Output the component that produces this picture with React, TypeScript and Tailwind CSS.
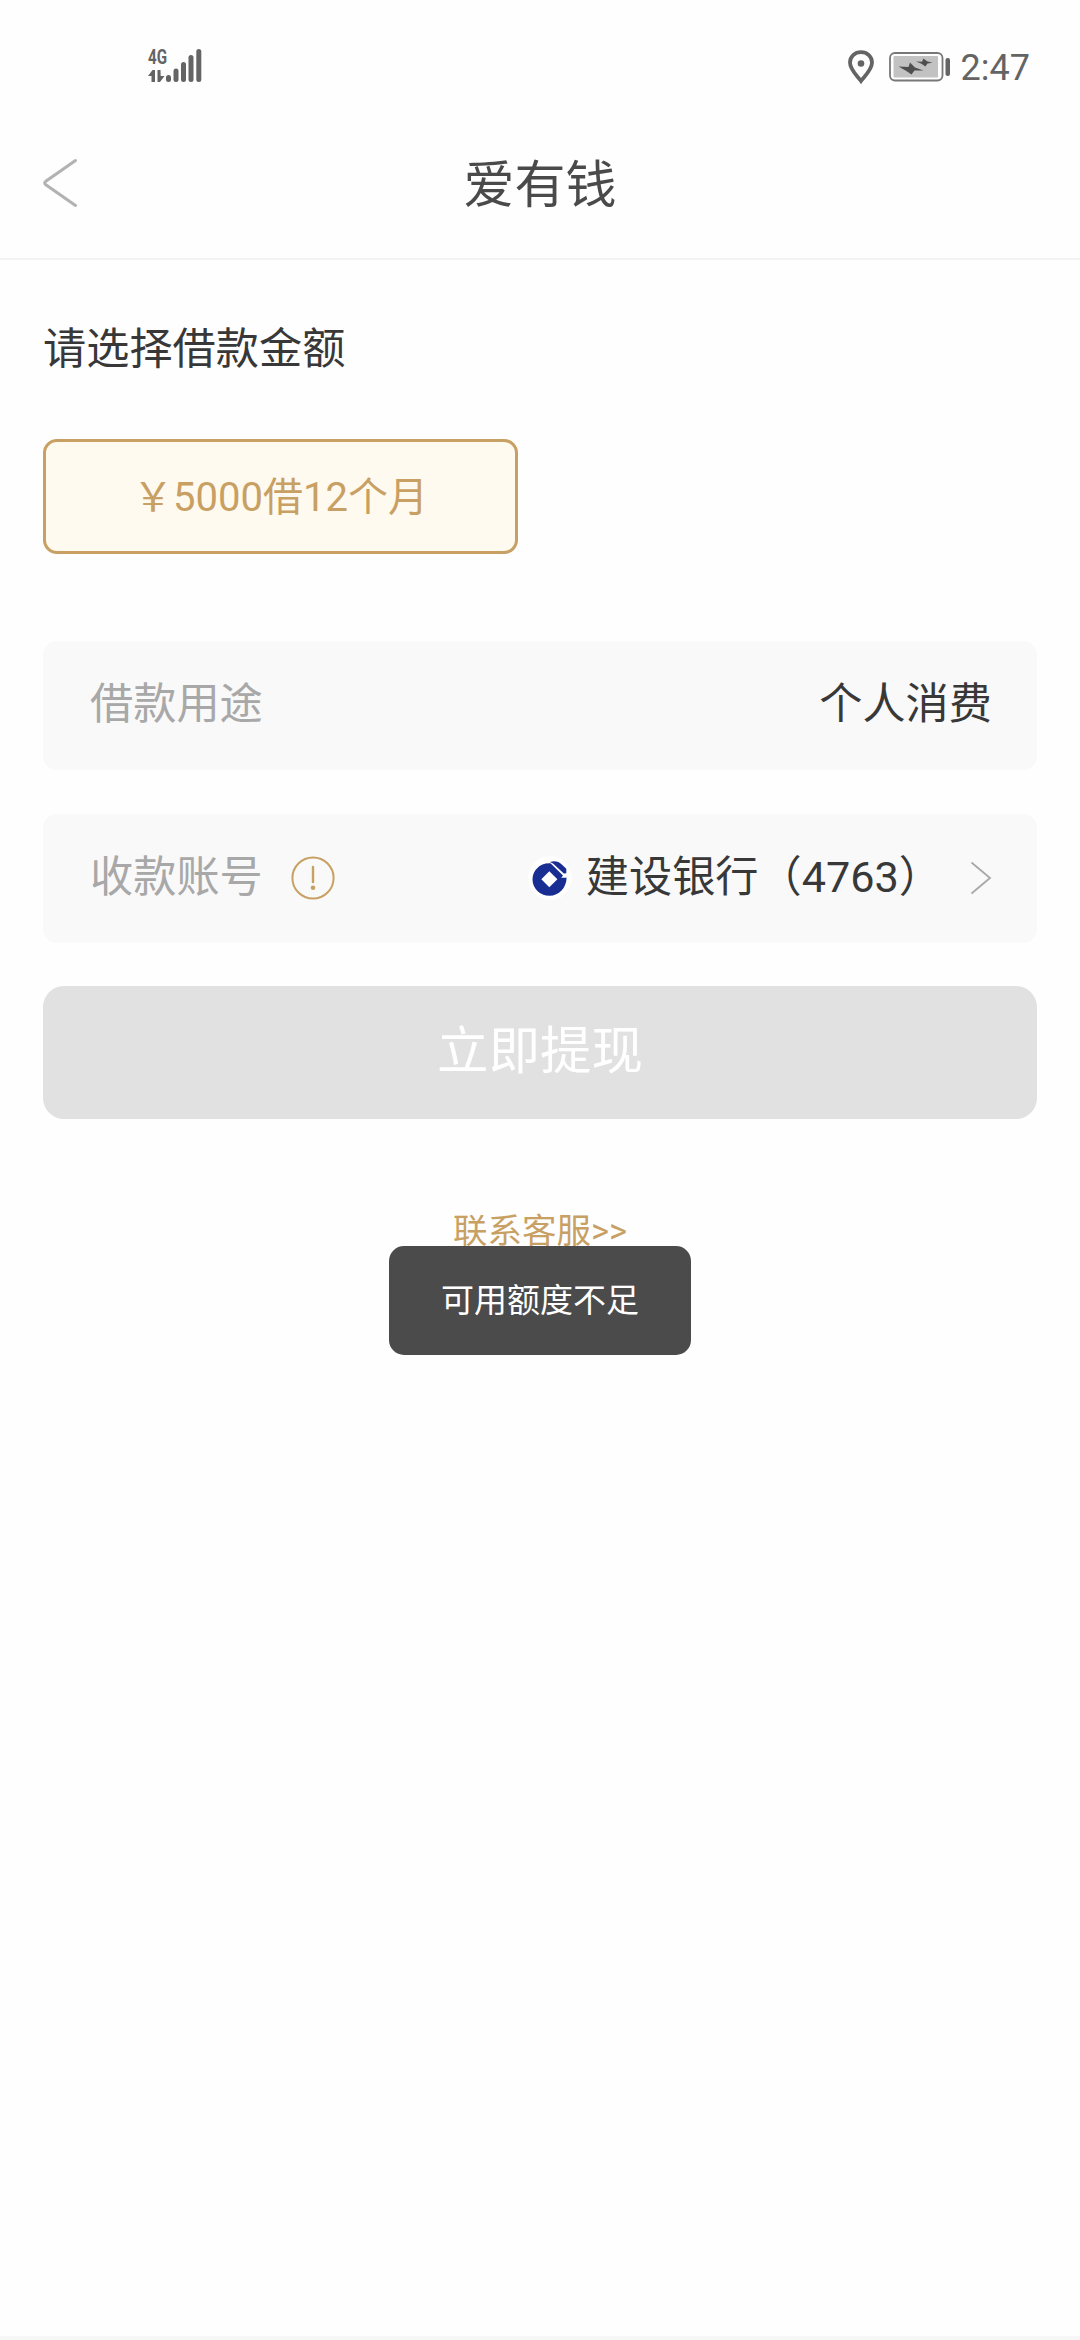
import type { ReactNode } from 'react';

const amountOptions = [{ id: 'm12', label: '￥5000借12个月' }];

function SignalIcon() {
  return (
    <svg width="70" height="40" viewBox="0 0 70 40" fill="#646464">
      <text
        x="1"
        y="19"
        fontSize="21"
        fontWeight="700"
        textLength="19"
        lengthAdjust="spacingAndGlyphs"
      >
        4G
      </text>
      {/* data arrows */}
      <path d="M5.5 25H8V37H4.5V31H1Z" />
      <path d="M10.5 25H13.5L13.7 31H17.5L13 37H10.5Z" />
      {/* bars */}
      <rect x="19" y="30" width="5" height="7" rx="2.5" />
      <rect x="26.5" y="23.5" width="5" height="13.5" rx="2.5" />
      <rect x="34" y="17" width="5" height="20" rx="2.5" />
      <rect x="41.5" y="10" width="5" height="27" rx="2.5" />
      <rect x="49.3" y="4" width="5" height="33" rx="2.5" />
    </svg>
  );
}

function LocationIcon() {
  return (
    <svg width="28" height="36" viewBox="0 0 28 36" fill="none">
      <path
        d="M14 32C10 26.5 3 21 3 13.6C3 7.6 7.8 3.2 14 3.2C20.2 3.2 25 7.6 25 13.6C25 21 18 26.5 14 32Z"
        stroke="#646464"
        strokeWidth="3.8"
      />
      <circle cx="14" cy="14.5" r="3.3" fill="#646464" />
    </svg>
  );
}

function BatteryIcon() {
  return (
    <svg width="62" height="30" viewBox="0 0 62 30">
      <rect x="1" y="1" width="52.5" height="27.5" rx="5" fill="#fefefe" stroke="#777777" strokeWidth="1.8" />
      <rect x="4.5" y="4" width="44.5" height="21.5" rx="1" fill="#c2c2c2" />
      <path d="M9.5 14.5L19.5 15L21 10.500L26 15.500L34.500 18.500L25.500 18.500L22.500 22.500L17 18.800Z" fill="#4f4f4f" />
      <path d="M27 9.500L33 9.700L34.500 6.500L38 9.300L43.500 10.700L38.500 11.500L36.300 14.500L32.500 11.700Z" fill="#4f4f4f" />
      <rect x="56.5" y="6" width="4.5" height="18" rx="2" fill="#646464" />
    </svg>
  );
}

function InfoIcon() {
  return (
    <svg width="44" height="44" viewBox="0 0 44 44" fill="none">
      <circle cx="22" cy="22" r="20.6" stroke="#c8a063" strokeWidth="2" />
      <path d="M22 11V26" stroke="#c8a063" strokeWidth="2.4" strokeLinecap="round" />
      <circle cx="22" cy="31.7" r="2.3" fill="#c8a063" />
    </svg>
  );
}

function BankLogo() {
  return (
    <svg width="44" height="44" viewBox="0 0 44 44">
      <circle cx="22" cy="22" r="21.8" fill="#ffffff" />
      <path
        d="M22.5 7.3L35 19.5L33.2 21.8H38.6C38.4 32 31 39.8 21.5 39.8C12 39.8 4.5 32.5 4.5 23.5C4.5 14.5 12 6.6 22.5 7.3Z"
        fill="#182e92"
      />
      <path d="M21.3 15.3L29.4 23.2L21.3 31.2L13.3 23.2Z" fill="#ffffff" />
      <path d="M22 6C26.5 4.4 30.6 5.2 33.5 8.2L38.300 12.800V17.200L35.800 17.500L25 7.500Z" fill="#182e92" />
    </svg>
  );
}

function FormRow({ label, children }: { label: ReactNode; children: ReactNode }) {
  return (
    <div className="flex h-[129px] items-center justify-between rounded-[14px] bg-[#f9f9f9] pb-px pl-[47px] pr-[45px] text-[43.2px] leading-none">
      <div className="flex items-center text-[#a8a8a8]">{label}</div>
      <div className="flex items-center text-[#383838]">{children}</div>
    </div>
  );
}

export default function App() {
  return (
    <div className="relative flex h-[2340px] w-[1080px] flex-col overflow-hidden bg-[#fefefe] font-[Roboto,'Noto_Sans_CJK_SC',sans-serif]">
      {/* Status bar */}
      <div className="flex h-[100px] shrink-0 items-start justify-between pl-[147px] pr-[50px] pt-[45px]">
        <SignalIcon />
        <div className="flex h-[44px] items-center">
          <LocationIcon />
          <div className="ml-[14px]">
            <BatteryIcon />
          </div>
          <span className="ml-[10px] pt-[2px] text-[36px] leading-none text-[#646464]">2:47</span>
        </div>
      </div>

      {/* Header */}
      <header className="grid h-[160px] shrink-0 grid-cols-3 items-center border-b-2 border-[#f3f3f3] px-[42px] pt-[8px]">
        <svg width="37" height="50" viewBox="0 0 37 50" fill="none">
          <path
            d="M33.5 2.5L3.5 23.5Q2 25 3.5 26.5L33.5 47.5"
            stroke="#b2b2b2"
            strokeWidth="3"
            strokeLinecap="round"
          />
        </svg>
        <h1 className="pt-[5px] text-center text-[51px] leading-none text-[#4a4a4a]">爱有钱</h1>
      </header>

      <main className="flex flex-col px-[43px]">
        <h2 className="mt-[68px] text-[43.2px] leading-[44px] text-[#383838]">请选择借款金额</h2>

        <div className="mt-[67px] grid grid-cols-2 gap-x-[44px]">
          {amountOptions.map((option) => (
            <button
              key={option.id}
              className="h-[115px] rounded-[14px] border-3 border-[#c8a063] bg-[#fffaef] pt-[2px] text-[40px] leading-none text-[#c8a063]"
            >
              {option.label}
            </button>
          ))}
        </div>

        <div className="mt-[87px] flex flex-col gap-[44px]">
          <FormRow label="借款用途">个人消费</FormRow>
          <FormRow
            label={
              <>
                <span>收款账号</span>
                <span className="ml-[28px]">
                  <InfoIcon />
                </span>
              </>
            }
          >
            <BankLogo />
            <span className="ml-[14px]">建设银行（4763）</span>
            <svg className="ml-[28px]" width="22" height="34" viewBox="0 0 22 34" fill="none">
              <path d="M1.5 1.5L20 17L1.5 32.5" stroke="#a8a8a8" strokeWidth="1.8" />
            </svg>
          </FormRow>
        </div>

        <button className="mt-[43px] h-[133px] rounded-[21px] bg-[#e1e1e1] pb-[2px] text-[51.5px] leading-none text-white">
          立即提现
        </button>

        <a className="mt-[94px] text-center text-[34.5px] leading-[36px] text-[#c8a063]">联系客服&gt;&gt;</a>
      </main>

      <div className="mt-auto h-1 bg-[#f6f6f6]" />

      {/* Toast */}
      <div className="absolute left-[389px] top-[1246px] flex h-[109px] w-[302px] items-center justify-center rounded-[15px] bg-[#4b4b4b] text-[33px] leading-none text-white">
        可用额度不足
      </div>
    </div>
  );
}
